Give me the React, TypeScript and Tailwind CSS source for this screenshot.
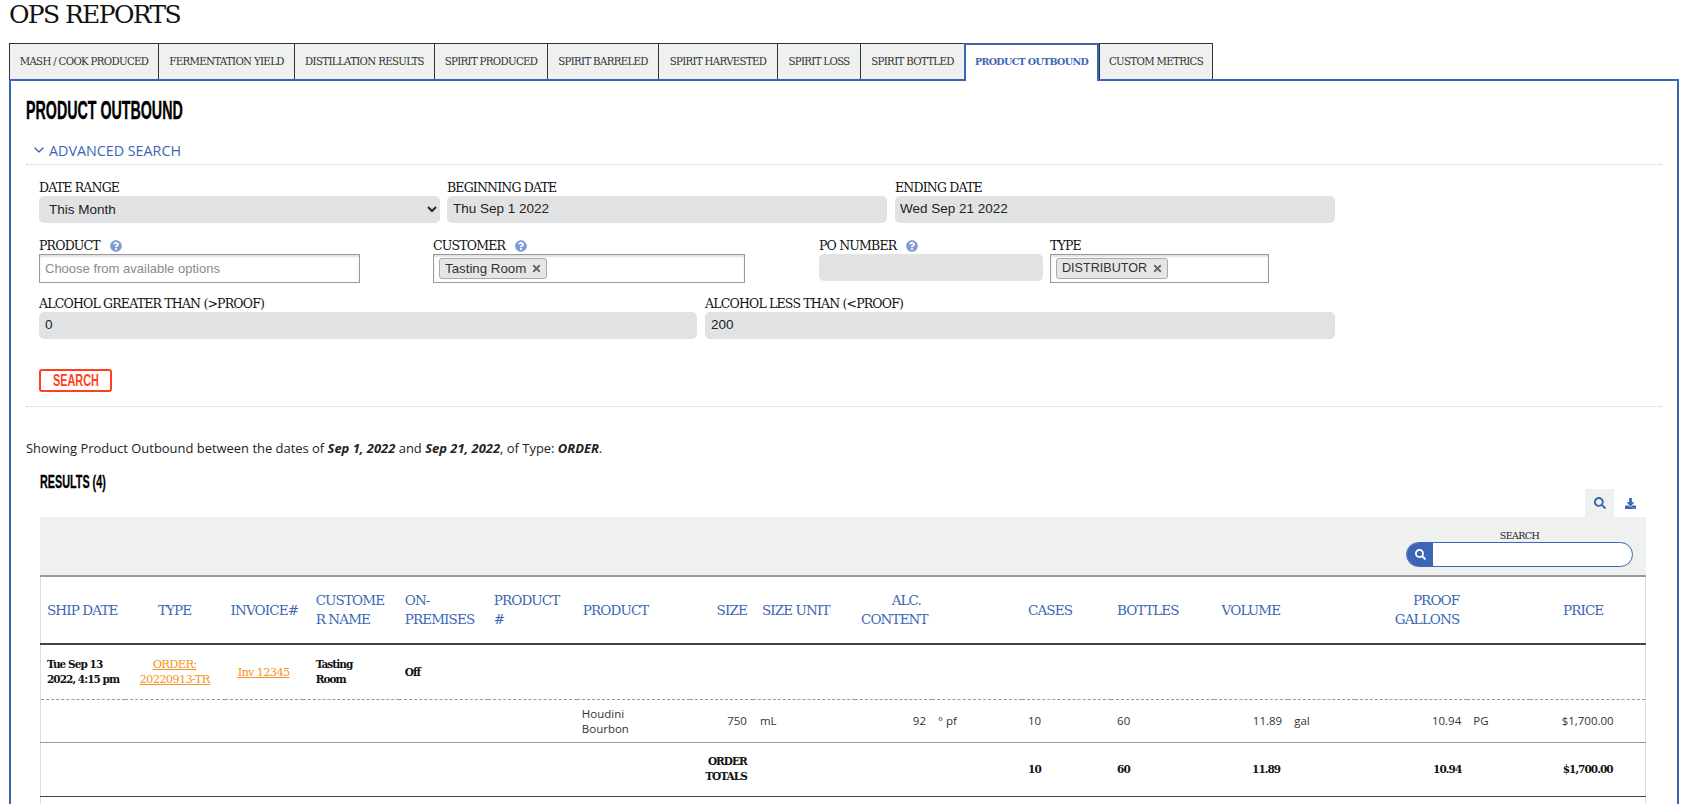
import React from "react";
import { FaSearch, FaDownload, FaQuestionCircle } from "react-icons/fa";
import { ChevronDown, X } from "lucide-react";

const slab = "font-['DejaVu_Serif',serif] tracking-[-0.065em]";
const slabBold = "font-['DejaVu_Serif',serif] tracking-[-0.09em]";
const sans = "font-['Open_Sans',sans-serif]";
const arial = "font-['Liberation_Sans',Arial,sans-serif]";
const display = "inline-block whitespace-nowrap font-['Liberation_Sans',Arial,sans-serif] font-bold";

const tabs: [string, number][] = [
  ["MASH / COOK PRODUCED", 149],
  ["FERMENTATION YIELD", 136],
  ["DISTILLATION RESULTS", 140],
  ["SPIRIT PRODUCED", 113],
  ["SPIRIT BARRELED", 111],
  ["SPIRIT HARVESTED", 119],
  ["SPIRIT LOSS", 83],
  ["SPIRIT BOTTLED", 104],
  ["PRODUCT OUTBOUND", 135],
  ["CUSTOM METRICS", 114],
];

function Help() {
  return <FaQuestionCircle className="text-[#7f9bd1] text-[12px] ml-[10px]" />;
}

function Label({ children, help, className = "" }: { children: React.ReactNode; help?: boolean; className?: string }) {
  return (
    <div className={`flex items-center h-[16px] text-[12.5px] leading-[16px] text-[#111] whitespace-nowrap ${slab} ${className}`}>
      <span>{children}</span>
      {help && <Help />}
    </div>
  );
}

function Gray({ value, className = "" }: { value?: string; className?: string }) {
  return (
    <div className={`bg-[#e1e2e4] rounded-[5px] h-[27px] flex items-center text-[13.5px] text-[#222] ${arial} ${className}`}>
      {value}
    </div>
  );
}

function Tag({ text, size }: { text: string; size: string }) {
  return (
    <span className={`h-[21px] flex items-center gap-[5px] pl-[5px] pr-[4px] bg-[#e6e6e6] border border-[#aaa] rounded-[3px] text-[#333] ${size} ${arial}`}>
      {text}
      <X size={11} strokeWidth={4} className="text-[#666]" />
    </span>
  );
}

const boxed = "h-[29px] bg-white border border-[#999] shadow-[inset_0_2px_2px_rgba(0,0,0,0.12)] flex items-center px-[5px]";

const cols = [84, 100, 78, 96, 89, 89, 113, 63, 102, 77, 90, 89, 103, 74, 67, 112, 63, 115];
const th = `font-normal text-[13.5px] leading-[19px] text-[#3b66b5] px-[6px] align-middle ${slab}`;
const bold = `font-bold text-[10.5px] leading-[15px] text-[#111] px-[6px] align-middle ${slabBold}`;
const link = `font-normal text-[11.5px] leading-[15px] text-[#f7931e] underline px-[6px] pt-[1px] align-middle text-center ${slab}`;
const td = `font-normal text-[11.5px] leading-[15px] text-[#333] px-[6px] align-middle ${sans}`;

export default function App() {
  return (
    <div className="h-[804px] w-[1686px] overflow-hidden bg-white">
      <h1 className={`h-[43px] pl-[9px] text-[25px] leading-[29px] text-[#111] font-normal ${slab}`}>OPS REPORTS</h1>

      <div className="flex items-start h-[38px] ml-[9px]">
        {tabs.map(([t, w], i) => {
          const active = t === "PRODUCT OUTBOUND";
          return (
            <div
              key={t}
              style={{ width: w }}
              className={
                active
                  ? `relative z-10 h-[38px] flex items-center justify-center bg-white border-2 border-b-0 border-[#3b66b5] text-[9.5px] font-bold text-[#3b66b5] whitespace-nowrap pb-[2px] ${slab}`
                  : `h-[36px] flex items-center justify-center bg-[#eff0f0] border-t border-l border-[#333] text-[10.2px] text-[#333] whitespace-nowrap ${i === tabs.length - 1 ? "border-r " : ""}${slab}`
              }
            >
              {t}
            </div>
          );
        })}
      </div>

      <div className="ml-[9px] mt-[-2px] w-[1670px] h-[800px] border-2 border-[#3b66b5] pl-[15px]">
        <div className="pt-[17px] h-[42px]">
          <h2 className={`${display} origin-left text-[25px] leading-[25px] text-black scale-x-[0.57] [-webkit-text-stroke:0.4px_black]`}>PRODUCT OUTBOUND</h2>
        </div>

        <div className={`w-[1636px] h-[42px] flex items-end pb-[6px] border-b border-dotted border-[#ccc] pl-[5px] text-[#3b66b5] text-[14.3px] leading-[14px] ${sans}`}>
          <ChevronDown size={16} strokeWidth={2} className="mr-[2px]" />
          <span>ADVANCED SEARCH</span>
        </div>

        <div className="pl-[13px]">
          <div className="flex gap-[7px] mt-[15px]">
            <div className="w-[401px]">
              <Label>DATE RANGE</Label>
              <select className={`w-full h-[27px] bg-[#e1e2e4] rounded-[5px] pl-[6px] text-[13.5px] text-[#222] ${arial}`} defaultValue="This Month">
                <option>This Month</option>
              </select>
            </div>
            <div className="w-[440px]">
              <Label>BEGINNING DATE</Label>
              <Gray value="Thu Sep 1 2022" className="pl-[6px]" />
            </div>
            <div className="w-[440px] ml-[1px]">
              <Label>ENDING DATE</Label>
              <Gray value="Wed Sep 21 2022" className="pl-[5px]" />
            </div>
          </div>

          <div className="flex mt-[15px]">
            <div className="w-[321px]">
              <Label help>PRODUCT</Label>
              <div className={`${boxed} text-[13px] text-[#8a8a8a] ${arial}`}>Choose from available options</div>
            </div>
            <div className="w-[312px] ml-[73px]">
              <Label help>CUSTOMER</Label>
              <div className={boxed}><Tag text="Tasting Room" size="text-[13.3px]" /></div>
            </div>
            <div className="w-[224px] ml-[74px]">
              <Label help>PO NUMBER</Label>
              <Gray />
            </div>
            <div className="w-[219px] ml-[7px]">
              <Label>TYPE</Label>
              <div className={boxed}><Tag text="DISTRIBUTOR" size="text-[12.6px]" /></div>
            </div>
          </div>

          <div className="flex gap-[8px] mt-[13px]">
            <div className="w-[658px]">
              <Label>ALCOHOL GREATER THAN (&gt;PROOF)</Label>
              <Gray value="0" className="pl-[6px]" />
            </div>
            <div className="w-[630px]">
              <Label>ALCOHOL LESS THAN (&lt;PROOF)</Label>
              <Gray value="200" className="pl-[6px]" />
            </div>
          </div>

          <button className="mt-[30px] w-[73px] h-[23px] border-2 border-[#ff3f1f] rounded-[3px] flex items-center justify-center overflow-hidden">
            <span className={`${display} origin-center text-[17px] leading-[18px] text-[#ff3f1f] scale-x-[0.64]`}>SEARCH</span>
          </button>
        </div>

        <div className="w-[1636px] mt-[14px] border-b border-dotted border-[#ccc]" />

        <p className={`mt-[32px] h-[18px] text-[12.95px] leading-[18px] text-[#222] ${sans}`}>
          Showing Product Outbound between the dates of <b><i>Sep 1, 2022</i></b> and <b><i>Sep 21, 2022</i></b>, of Type: <b><i>ORDER</i></b>.
        </p>

        <div className="ml-[14px] w-[1606px] mt-[14px]">
          <div className="h-[18px] -mt-[1px] mb-[1px]">
            <span className={`${display} origin-left text-[18px] leading-[18px] text-black scale-x-[0.6] [-webkit-text-stroke:0.3px_black]`}>RESULTS (4)</span>
          </div>

          <div className="flex justify-end h-[28px]">
            <div className="w-[29px] flex items-center justify-center bg-[#eff0f0] text-[#3b66b5] text-[12px]"><FaSearch /></div>
            <div className="w-[32px] flex items-center justify-center text-[#3b66b5] text-[11px]"><FaDownload /></div>
          </div>

          <div className="h-[60px] bg-[#eff0f0] border-b-2 border-[#999] flex flex-col items-end pr-[13px] pt-[12px]">
            <div className="w-[227px]">
              <div className={`text-center text-[9.5px] leading-[13px] text-[#222] ${slab}`}>SEARCH</div>
              <div className="h-[25px] flex rounded-full border border-[#3b66b5] bg-white overflow-hidden">
                <div className="w-[26px] bg-[#3b66b5] flex items-center justify-center text-white text-[11px]"><FaSearch /></div>
              </div>
            </div>
          </div>

          <table className="table-fixed border-collapse w-[1606px] border-x border-[#ddd]">
            <colgroup>
              {cols.map((w, i) => <col key={i} style={{ width: w }} />)}
            </colgroup>
            <thead>
              <tr className="h-[67px] border-b-2 border-[#444]">
                <th className={`${th} text-left whitespace-nowrap`}>SHIP DATE</th>
                <th className={`${th} text-center`}>TYPE</th>
                <th className={`${th} text-center`}>INVOICE#</th>
                <th className={`${th} text-left !pl-[13px]`}>CUSTOME<br />R NAME</th>
                <th className={`${th} text-left`}>ON-<br />PREMISES</th>
                <th className={`${th} text-left`}>PRODUCT<br />#</th>
                <th className={`${th} text-left`}>PRODUCT</th>
                <th className={`${th} text-right`}>SIZE</th>
                <th className={`${th} text-left !pl-[9px]`}>SIZE UNIT</th>
                <th className={`${th} text-right !pr-[11px]`}>ALC.<br />CONTENT</th>
                <th className={th}></th>
                <th className={`${th} text-left`}>CASES</th>
                <th className={`${th} text-left`}>BOTTLES</th>
                <th className={`${th} text-right !pr-[8px]`}>VOLUME</th>
                <th className={th}></th>
                <th className={`${th} text-right !pr-[8px]`}>PROOF<br />GALLONS</th>
                <th className={th}></th>
                <th className={`${th} text-center !pr-[15px]`}>PRICE</th>
              </tr>
            </thead>
            <tbody>
              <tr className="h-[55px] border-b border-dashed border-[#999]">
                <td className={`${bold} text-left whitespace-nowrap pt-[1px]`}>Tue Sep 13<br />2022, 4:15 pm</td>
                <td className={link}>ORDER:<br />20220913-TR</td>
                <td className={link}>Inv 12345</td>
                <td className={`${bold} !pl-[13px] pt-[1px]`}>Tasting<br />Room</td>
                <td className={`${bold} pt-[1px]`}>Off</td>
                <td colSpan={13}></td>
              </tr>
              <tr className="h-[43px] border-b border-[#999]">
                <td colSpan={6}></td>
                <td className={`${td} !pl-[5px]`}>Houdini<br />Bourbon</td>
                <td className={`${td} text-right`}>750</td>
                <td className={`${td} !pl-[7px]`}>mL</td>
                <td className={`${td} text-right`}>92</td>
                <td className={td}>° pf</td>
                <td className={td}>10</td>
                <td className={td}>60</td>
                <td className={`${td} text-right`}>11.89</td>
                <td className={td}>gal</td>
                <td className={`${td} text-right`}>10.94</td>
                <td className={td}>PG</td>
                <td className={`${td} text-center`}>$1,700.00</td>
              </tr>
              <tr className="h-[54px] border-b border-[#444]">
                <td colSpan={8} className={`${bold} text-right`}>ORDER<br />TOTALS</td>
                <td></td>
                <td></td>
                <td></td>
                <td className={bold}>10</td>
                <td className={bold}>60</td>
                <td className={`${bold} text-right !pr-[8px]`}>11.89</td>
                <td></td>
                <td className={`${bold} text-right`}>10.94</td>
                <td></td>
                <td className={`${bold} text-center`}>$1,700.00</td>
              </tr>
              <tr className="h-[55px]"><td colSpan={18}></td></tr>
            </tbody>
          </table>
        </div>
      </div>
    </div>
  );
}
